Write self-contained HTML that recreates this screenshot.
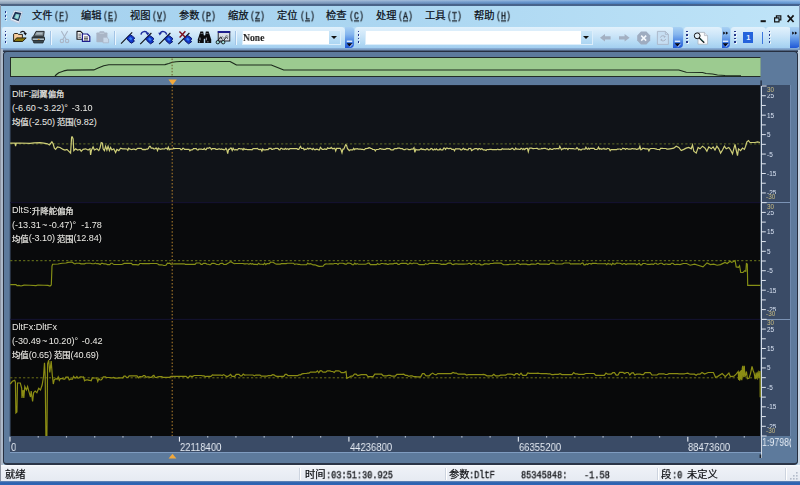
<!DOCTYPE html>
<html><head><meta charset="utf-8"><title>Flight data viewer</title>
<style>
html,body{margin:0;padding:0;background:#5d7a9c;font-family:"Liberation Sans",sans-serif;}
body{width:800px;height:485px;overflow:hidden;font-family:"Liberation Sans",sans-serif;}
#app{position:relative;width:800px;height:485px;overflow:hidden;background:#b5d6ef;}
#app div,#app span,#app svg{position:absolute;}
#app span.t{white-space:pre;}
svg.cj{overflow:visible;}
svg.cj text{font-family:"Liberation Sans","Noto Sans CJK SC",sans-serif;white-space:pre;}
#topband{left:0;top:0;width:800px;height:5px;background:linear-gradient(to bottom,rgba(255,255,255,.34) 0%,rgba(255,255,255,.08) 35%,rgba(0,0,30,.06) 60%,rgba(0,0,30,.26) 100%),linear-gradient(to right,#9aaec4 0%,#8aa3c2 35%,#5f93cf 70%,#4d8bd3 85%,#6fa3dc 100%);}
#topline{left:0;top:4.3px;width:800px;height:1.3px;background:linear-gradient(to right,#4e6382,#44638f);}
#menubar{left:0;top:5.5px;width:800px;height:21.5px;background:linear-gradient(to right,#a6d2ef 0%,#abd6f1 50%,#bfe4f8 100%);}
#leftedge{left:0;top:5px;width:1px;height:476px;background:#8d94a2;z-index:5;}
#leftedge2{left:1px;top:49px;width:2px;height:416px;background:#adb9c9;}
.mi{top:0;height:21.5px;font-family:"Liberation Mono",monospace;font-size:9.6px;color:#10141c;}
.mi .l{top:5.0px;white-space:pre;font-size:10px;transform-origin:0 50%;transform:scale(0.83,1.12);color:#0c1018;}
.mi u{text-decoration:underline;text-underline-offset:1px;}
#tbrow{left:0;top:27px;width:800px;height:21.5px;background:linear-gradient(to bottom,#b9def6,#a9d3f1);}
.tb{top:0;height:21px;border-radius:3px 4px 4px 3px;background:linear-gradient(to bottom,#e2f2fc 0%,#cfe7f9 35%,#b4daf4 75%,#a3cff0 100%);}
.cap{top:0;height:21px;border-radius:0 3px 4px 0;background:linear-gradient(to bottom,#a9d1f3 0%,#86b6ee 35%,#4a84e3 70%,#1f57d6 100%);}
.grip{width:3px;height:14px;top:3.5px;}
.grip i{position:absolute;left:0;width:1.7px;height:1.7px;background:#26388a;box-shadow:0.8px 0.8px 0 #ffffff;}
.sep{top:4px;width:1px;height:13.5px;background:#a2c4e6;box-shadow:1px 0 0 #eaf5fd;}
.combo{top:2.7px;height:15px;background:#fff;border:0.8px solid #dceefb;box-sizing:border-box;}
.combo .btn{right:0;top:0;width:11px;height:100%;background:linear-gradient(to bottom,#cbe6f8,#acd6f3);}
.combo .btn:after{content:"";position:absolute;left:2.6px;top:5.2px;border-left:3px solid transparent;border-right:3px solid transparent;border-top:3.2px solid #111;}
.combo .txt{left:0.5px;top:1.6px;font-family:"Liberation Serif",serif;font-size:10.7px;line-height:11px;font-weight:bold;color:#141414;transform-origin:0 50%;transform:scaleX(0.9);}
#tbshadow{left:0;top:48px;width:800px;height:3.5px;background:linear-gradient(to bottom,#8bb4df 0%,#7a98bc 40%,#2f3b50 80%,#2f3b50 100%);}
#frame{left:3px;top:51px;width:795px;height:414px;box-sizing:border-box;border:1px solid #262f40;border-bottom:2px solid #2b3547;border-radius:4px;background:#5d7a9c;}
#rightedge{left:798px;top:50px;width:2px;height:416px;background:#cbd7e4;}
#ov{left:9.5px;top:57.3px;width:751.6px;height:19.4px;background:#9ccb90;box-sizing:border-box;border:1.2px solid #232c28;border-left-width:0.8px;border-right:0.6px solid #7fa08c;}
.panel{left:10px;width:750px;}
#axisline{left:761px;top:86px;width:1px;height:372px;background:#cfd8e4;}
#ystrip{left:761.5px;top:85.3px;width:29.2px;height:350.5px;background:#3a4b66;border-right:1px solid #6f8aae;box-sizing:border-box;}
#xstrip{left:10px;top:436px;width:750.5px;height:17.2px;background:#3a4b66;border-bottom:1px solid #7f9cc0;box-sizing:border-box;}
.xl{top:442.0px;font-size:10.4px;line-height:12px;color:#e6ecf4;white-space:pre;transform-origin:0 50%;transform:scaleX(0.91);}
.yl{font-size:6.4px;color:#d8e2f2;white-space:pre;left:767.3px;line-height:7px;}
.lbl{left:12px;font-size:9.1px;color:#ecebe6;white-space:pre;line-height:11px;}
#status{left:0;top:465px;width:800px;height:16px;background:linear-gradient(to bottom,#fbfcfe 0%,#eef1f7 15%,#e6eaf2 100%);}
.st{top:3.6px;height:12px;width:100px;}
.st .m{top:1.1px;font-family:"Liberation Mono",monospace;font-size:10px;line-height:12px;color:#101216;white-space:pre;transform-origin:0 50%;transform:scale(0.858,1.13);}
.ssep{top:2.5px;width:1px;height:12.5px;background:#cdd4df;box-shadow:1px 0 0 #fff;}
#botband{left:0;top:481px;width:800px;height:4px;background:linear-gradient(to bottom,#6f8db6 0%,#3468b2 35%,#2a60b0 70%,#3169b8 100%);}

.l1{word-spacing:-1.25px;}
.l2{word-spacing:-0.8px;letter-spacing:-0.06px;}
.yb{color:#c9bd82;background:#3a4b66;height:6.6px;line-height:6.6px;padding-right:1px;z-index:2;}
.ydiv{left:761.5px;width:28.5px;height:1px;background:#7b93b5;}

.st .m,.mi .l,.combo .txt,.xl,.yl{will-change:transform;}

.st .m,.mi .l{-webkit-text-stroke:0.3px #101216;}
#redge0{left:799px;top:5px;width:1px;height:45px;background:#7f95b2;z-index:5;}

</style></head>
<body>
<div id="app">
<div id="topband"></div><div id="menubar">
<div class="grip" style="left:4.8px;top:5.6px;height:11px"><i style="top:0"></i><i style="top:3.8px"></i><i style="top:7.6px"></i></div>
<svg style="left:0;top:0" width="30" height="21.5" viewBox="0 5.5 30 21.5">
<path d="M14.1 9.9L22.6 11.4L19.1 22.9L10.2 19.2Z" fill="#e6edf6" stroke="#a9b9d2" stroke-width="0.6" stroke-linejoin="round"/>
<path d="M15 11.3L21.3 12.4L18.6 20.7L11.9 18.1Z" fill="#1d2f54"/>
<path d="M15.9 13.3L19.6 14L18.1 18.9L14.1 17.5Z" fill="#7fc6cc"/>
<path d="M16.6 14.4L18.4 14.8L17.6 17.6L15.6 17Z" fill="#a5dcd8"/>
<path d="M10.4 19.4L19 22.9L19.4 21.9" fill="none" stroke="#c4d0e2" stroke-width="0.7"/>
</svg>
<div class="mi" style="left:31.8px;width:40px"><svg class="cj" role="img" aria-label="文件" width="20.60" height="13.08" viewBox="0 -9.59 20.60 13.08" style="left:-0.3px;top:3.9px"><text x="0" y="0" font-size="10.3" fill="#0c1018" stroke="#0c1018" stroke-width="0.25">文件</text></svg><span class="l" style="left:22.0px">(<u>F</u>)</span></div>
<div class="mi" style="left:81.0px;width:40px"><svg class="cj" role="img" aria-label="编辑" width="20.60" height="13.08" viewBox="0 -9.59 20.60 13.08" style="left:-0.3px;top:3.9px"><text x="0" y="0" font-size="10.3" fill="#0c1018" stroke="#0c1018" stroke-width="0.25">编辑</text></svg><span class="l" style="left:22.0px">(<u>E</u>)</span></div>
<div class="mi" style="left:130.1px;width:40px"><svg class="cj" role="img" aria-label="视图" width="20.60" height="13.08" viewBox="0 -9.59 20.60 13.08" style="left:-0.3px;top:3.9px"><text x="0" y="0" font-size="10.3" fill="#0c1018" stroke="#0c1018" stroke-width="0.25">视图</text></svg><span class="l" style="left:22.0px">(<u>V</u>)</span></div>
<div class="mi" style="left:179.2px;width:40px"><svg class="cj" role="img" aria-label="参数" width="20.60" height="13.08" viewBox="0 -9.59 20.60 13.08" style="left:-0.3px;top:3.9px"><text x="0" y="0" font-size="10.3" fill="#0c1018" stroke="#0c1018" stroke-width="0.25">参数</text></svg><span class="l" style="left:22.0px">(<u>P</u>)</span></div>
<div class="mi" style="left:228.4px;width:40px"><svg class="cj" role="img" aria-label="缩放" width="20.60" height="13.08" viewBox="0 -9.59 20.60 13.08" style="left:-0.3px;top:3.9px"><text x="0" y="0" font-size="10.3" fill="#0c1018" stroke="#0c1018" stroke-width="0.25">缩放</text></svg><span class="l" style="left:22.0px">(<u>Z</u>)</span></div>
<div class="mi" style="left:277.6px;width:40px"><svg class="cj" role="img" aria-label="定位" width="20.60" height="13.08" viewBox="0 -9.59 20.60 13.08" style="left:-0.3px;top:3.9px"><text x="0" y="0" font-size="10.3" fill="#0c1018" stroke="#0c1018" stroke-width="0.25">定位</text></svg><span class="l" style="left:22.0px">(<u>L</u>)</span></div>
<div class="mi" style="left:326.7px;width:40px"><svg class="cj" role="img" aria-label="检查" width="20.60" height="13.08" viewBox="0 -9.59 20.60 13.08" style="left:-0.3px;top:3.9px"><text x="0" y="0" font-size="10.3" fill="#0c1018" stroke="#0c1018" stroke-width="0.25">检查</text></svg><span class="l" style="left:22.0px">(<u>C</u>)</span></div>
<div class="mi" style="left:375.9px;width:40px"><svg class="cj" role="img" aria-label="处理" width="20.60" height="13.08" viewBox="0 -9.59 20.60 13.08" style="left:-0.3px;top:3.9px"><text x="0" y="0" font-size="10.3" fill="#0c1018" stroke="#0c1018" stroke-width="0.25">处理</text></svg><span class="l" style="left:22.0px">(<u>A</u>)</span></div>
<div class="mi" style="left:425.0px;width:40px"><svg class="cj" role="img" aria-label="工具" width="20.60" height="13.08" viewBox="0 -9.59 20.60 13.08" style="left:-0.3px;top:3.9px"><text x="0" y="0" font-size="10.3" fill="#0c1018" stroke="#0c1018" stroke-width="0.25">工具</text></svg><span class="l" style="left:22.0px">(<u>T</u>)</span></div>
<div class="mi" style="left:474.1px;width:40px"><svg class="cj" role="img" aria-label="帮助" width="20.60" height="13.08" viewBox="0 -9.59 20.60 13.08" style="left:-0.3px;top:3.9px"><text x="0" y="0" font-size="10.3" fill="#0c1018" stroke="#0c1018" stroke-width="0.25">帮助</text></svg><span class="l" style="left:22.0px">(<u>H</u>)</span></div>
<svg style="left:758px;top:8px" width="40" height="12" viewBox="0 0 40 12">
<rect x="2.6" y="6.2" width="5.2" height="2" fill="#151515"/>
<path d="M18.4 1.9h4.4v4h-4.4z" fill="none" stroke="#151515" stroke-width="1.2"/>
<path d="M16.6 3.9h4.4v4h-4.4z" fill="#b9e0f7" stroke="#151515" stroke-width="1.2"/>
<path d="M29.6 1.4 L35.6 8 M35.6 1.4 L29.6 8" stroke="#151515" stroke-width="1.7" fill="none"/>
</svg>
</div><div id="topline"></div>
<div id="tbrow">
<div class="tb" style="left:2px;width:343px"></div><div class="cap" style="left:344.5px;width:9px"><svg style="left:1.0px;top:12.5px" width="7" height="8" viewBox="0 0 7 8"><rect x="0.8" y="0.6" width="5.4" height="1.3" fill="#eef4fc"/><path d="M0.6 3.2H6.4L3.5 6.4Z" fill="#0a0a14"/><path d="M3.5 7.2L6.6 3.8" stroke="#dfe9f8" stroke-width="0.8"/></svg></div><div class="grip" style="left:4.6px"><i style="top:0"></i><i style="top:3.6px"></i><i style="top:7.2px"></i><i style="top:10.8px"></i></div>
<svg style="left:0;top:0" width="345" height="22" viewBox="0 27 345 22">
<!-- open folder -->
<path d="M13.6 41.3V34.2L14.6 33.5H17.6L18.4 34.4H22.4V37.8" fill="#f6cc9c" stroke="#1a1408" stroke-width="0.9" stroke-linejoin="round"/>
<path d="M13.6 41.5L16.6 37.9H26.2L22.6 41.5Z" fill="#86760e" stroke="#1a1408" stroke-width="0.9" stroke-linejoin="round"/>
<path d="M20.4 32.6C21.6 30.8 24.6 30.8 25.2 33.2" fill="none" stroke="#15151a" stroke-width="1.3"/>
<path d="M23.4 32.9H26.8L25.6 35.6Z" fill="#15151a"/>
<!-- printer -->
<path d="M33.6 36.2L36 31.4H44.2L43.6 36.2Z" fill="#7d898f" stroke="#1b1f22" stroke-width="0.9" stroke-linejoin="round"/>
<path d="M36.8 32.6H42.6L42.2 34.6H35.8Z" fill="#aab6bc"/>
<rect x="31.6" y="36.2" width="13.4" height="4.6" rx="1.6" fill="#2a3236"/>
<rect x="32.6" y="38.4" width="11.4" height="1.6" fill="#aebec6"/>
<rect x="37.8" y="39" width="1.8" height="1.1" fill="#e09020"/>
<path d="M33 40.6H43.8L43 43H33.8Z" fill="#3d4c53" stroke="#1b1f22" stroke-width="0.7"/>
<!-- scissors (disabled) -->
<g fill="none" stroke="#a9b5c6" stroke-width="1.1" stroke-linecap="round">
<path d="M61.6 31.4L66.2 39.4"/><path d="M67.4 31.4L62.8 39.4"/>
<circle cx="61.9" cy="40.9" r="1.7"/><circle cx="67.1" cy="40.9" r="1.7"/>
</g>
<!-- copy -->
<path d="M77 31.4H80.6L82.6 33.4V39.2H77Z" fill="#f4f4f4" stroke="#15151a" stroke-width="1.1" stroke-linejoin="round"/>
<path d="M78.4 34.2H81M78.4 35.8H81M78.4 37.4H81" stroke="#444" stroke-width="0.7"/>
<path d="M82.4 34H87.4L89.8 36.4V41.4H82.4Z" fill="#f4f4f8" stroke="#1e1e8c" stroke-width="1.2" stroke-linejoin="round"/>
<path d="M84 37H88M84 38.6H88M84 40H88" stroke="#333" stroke-width="0.8"/>
<!-- paste (disabled) -->
<rect x="96.4" y="32.4" width="11" height="9.8" rx="0.8" fill="#a9b5c6"/>
<rect x="99.4" y="31.2" width="5" height="2.4" rx="0.8" fill="#a9b5c6"/>
<rect x="99.6" y="32.8" width="4.6" height="0.9" fill="#c4d0de"/>
<path d="M103 37.2H106.6L108.6 39V42.8H103Z" fill="#c9d9ea" stroke="#a9b5c6" stroke-width="0.8"/>
<!-- flags -->
<g>
<path d="M121 43.6L132.2 32.4" stroke="#101014" stroke-width="1.1"/>
<path d="M126.4 38.2L130.2 34.8L132.6 36.2L134.8 38.2L133.2 39.6L134.4 41.2L131.4 43.2L129 41.4Z" fill="#1238c8" stroke="#0a1668" stroke-width="1" stroke-linejoin="round"/>
<path d="M128.8 38.4L130.4 37L132.4 38.8L130.9 40.4Z" fill="#3c82f2"/>
</g>
<g transform="translate(19.2 0.6)">
<path d="M121 43.6L132.2 32.4" stroke="#101014" stroke-width="1.1"/>
<path d="M126.4 38.2L130.2 34.8L132.6 36.2L134.8 38.2L133.2 39.6L134.4 41.2L131.4 43.2L129 41.4Z" fill="#1238c8" stroke="#0a1668" stroke-width="1" stroke-linejoin="round"/>
<path d="M128.8 38.4L130.4 37L132.4 38.8L130.9 40.4Z" fill="#3c82f2"/>
</g>
<g transform="translate(38.2 0.6)">
<path d="M121 43.6L132.2 32.4" stroke="#101014" stroke-width="1.1"/>
<path d="M126.4 38.2L130.2 34.8L132.6 36.2L134.8 38.2L133.2 39.6L134.4 41.2L131.4 43.2L129 41.4Z" fill="#1238c8" stroke="#0a1668" stroke-width="1" stroke-linejoin="round"/>
<path d="M128.8 38.4L130.4 37L132.4 38.8L130.9 40.4Z" fill="#3c82f2"/>
</g>
<g transform="translate(57.2 0.6)">
<path d="M121 43.6L132.2 32.4" stroke="#101014" stroke-width="1.1"/>
<path d="M126.4 38.2L130.2 34.8L132.6 36.2L134.8 38.2L133.2 39.6L134.4 41.2L131.4 43.2L129 41.4Z" fill="#1238c8" stroke="#0a1668" stroke-width="1" stroke-linejoin="round"/>
<path d="M128.8 38.4L130.4 37L132.4 38.8L130.9 40.4Z" fill="#3c82f2"/>
</g>
<path d="M141 34.6C141.4 31.2 146 30.6 147.4 33" fill="none" stroke="#1c2c9c" stroke-width="1.4"/>
<path d="M145.6 32.8H149.4L147.8 35.6Z" fill="#1c2c9c"/>
<path d="M166.6 34.6C166.2 31.2 161.6 30.6 160.2 33" fill="none" stroke="#1c2c9c" stroke-width="1.4"/>
<path d="M158.2 32.8H162L159.8 35.6Z" fill="#1c2c9c"/>
<path d="M179.4 31.4L185.6 37.6M185.4 31.2L179.6 37.4" stroke="#7a0e1e" stroke-width="1.4"/>
<!-- binoculars -->
<path d="M200.4 31.6H203.2L203.8 35.4V43H197.8V39.4Z" fill="#0c0c0e"/>
<path d="M205.8 31.6H208.6L211.2 39.4V43H205.2V35.4Z" fill="#0c0c0e"/>
<rect x="203" y="35.4" width="3" height="3.4" fill="#0c0c0e"/>
<rect x="200.6" y="33" width="2.2" height="0.9" fill="#70747c"/><rect x="206.2" y="33" width="2.2" height="0.9" fill="#70747c"/>
<rect x="199.4" y="37.6" width="1.2" height="2.6" fill="#8a8e98"/><rect x="205.8" y="37.6" width="1.2" height="2.6" fill="#8a8e98"/>
<rect x="199" y="41.4" width="1" height="0.9" fill="#c8c8d0"/><rect x="207.4" y="41.4" width="1" height="0.9" fill="#c8c8d0"/>
<!-- picture / glasses -->
<rect x="218.2" y="31.6" width="11.6" height="9.4" fill="#d9dee6" stroke="#16161c" stroke-width="0.9"/>
<rect x="217.8" y="31" width="12.4" height="2" fill="#1e1e8c"/>
<path d="M220 39.4L222.4 36.4L224 38.6L226.6 35L228.4 37.2" fill="none" stroke="#7a8088" stroke-width="0.8"/>
<path d="M217.2 41.6L220.6 36.8L222.4 39.6M222.8 41.6L226.4 37L228 38.6" fill="none" stroke="#101014" stroke-width="0.9"/>
<circle cx="217.8" cy="42.2" r="1.7" fill="#a2e2de" stroke="#101014" stroke-width="0.9"/>
<circle cx="223.2" cy="42.2" r="1.7" fill="#a2e2de" stroke="#101014" stroke-width="0.9"/>
<path d="M219.4 42H221.6" stroke="#101014" stroke-width="0.8"/>
</svg>

<div class="sep" style="left:50px"></div><div class="sep" style="left:114px"></div><div class="sep" style="left:235px"></div>
<div class="combo" style="left:241.5px;width:99px"><span class="txt t">None</span><div class="btn"></div></div>
<div class="tb" style="left:355px;width:319px"></div><div class="cap" style="left:673px;width:9.5px"><svg style="left:1.2px;top:12.5px" width="7" height="8" viewBox="0 0 7 8"><rect x="0.8" y="0.6" width="5.4" height="1.3" fill="#eef4fc"/><path d="M0.6 3.2H6.4L3.5 6.4Z" fill="#0a0a14"/><path d="M3.5 7.2L6.6 3.8" stroke="#dfe9f8" stroke-width="0.8"/></svg></div><div class="grip" style="left:357.6px"><i style="top:0"></i><i style="top:3.6px"></i><i style="top:7.2px"></i><i style="top:10.8px"></i></div>
<div class="combo" style="left:364.5px;width:228px"><div class="btn"></div></div>
<div class="tb" style="left:683.5px;width:38.5px"></div><div class="cap" style="left:721.5px;width:8px"><svg style="left:1.3px;top:4.3px" width="6" height="5" viewBox="0 0 6 5"><path d="M0.2 0.4L2.5 2.1L0.2 3.8ZM2.9 0.4L5.2 2.1L2.9 3.8Z" fill="#0c0c14"/></svg><svg style="left:0.5px;top:12.5px" width="7" height="8" viewBox="0 0 7 8"><rect x="0.8" y="0.6" width="5.4" height="1.3" fill="#eef4fc"/><path d="M0.6 3.2H6.4L3.5 6.4Z" fill="#0a0a14"/><path d="M3.5 7.2L6.6 3.8" stroke="#dfe9f8" stroke-width="0.8"/></svg></div><div class="grip" style="left:686px"><i style="top:0"></i><i style="top:3.6px"></i><i style="top:7.2px"></i><i style="top:10.8px"></i></div>
<div class="tb" style="left:731px;width:34.5px"></div><div class="grip" style="left:734px"><i style="top:0"></i><i style="top:3.6px"></i><i style="top:7.2px"></i><i style="top:10.8px"></i></div>
<div style="left:743.3px;top:5px;width:10px;height:10.5px;background:#2463dc"></div><span class="t" style="left:746.3px;top:6.6px;font-size:7.5px;font-weight:bold;color:#e8f0ff;line-height:8px">1</span>
<div style="left:761.5px;top:4.5px;width:1.2px;height:12.5px;background:#3d78de"></div>
<div class="tb" style="left:766px;width:25px"></div><div class="cap" style="left:790px;width:10px"><svg style="left:2.3px;top:4.3px" width="6" height="5" viewBox="0 0 6 5"><path d="M0.2 0.4L2.5 2.1L0.2 3.8ZM2.9 0.4L5.2 2.1L2.9 3.8Z" fill="#0c0c14"/></svg></div><div class="grip" style="left:768.6px"><i style="top:0"></i><i style="top:3.6px"></i><i style="top:7.2px"></i><i style="top:10.8px"></i></div>
<svg style="left:594px;top:0" width="120" height="22" viewBox="594 27 120 22">
<path d="M600 37.7L605 34V36.2H610.6V39.4H605V41.6Z" fill="#a3b0c2"/>
<path d="M629.6 37.7L624.6 34V36.2H619V39.4H624.6V41.6Z" fill="#a3b0c2"/>
<path d="M641 31.6H646.4L650.2 35.4V40.6L646.4 44.4H641L637.2 40.6V35.4Z" fill="#9eacc0"/>
<path d="M641.2 35.6L646.2 40.6M646.2 35.6L641.2 40.6" stroke="#f4f8fc" stroke-width="1.5"/>
<path d="M657.4 31.4H665.4L668.4 34.4V44.4H657.4Z" fill="#c6def2" stroke="#a9b5c6" stroke-width="0.9" stroke-linejoin="round"/>
<path d="M665.4 31.4V34.4H668.4" fill="none" stroke="#a9b5c6" stroke-width="0.8"/>
<path d="M660.4 37.6C660.6 35.6 663.6 35.2 664.6 36.4M665.6 39C665.4 41 662.4 41.4 661.4 40.2" fill="none" stroke="#a9b5c6" stroke-width="1"/>
<path d="M663.6 35.4L666 36.6L664 38Z M662.4 41.2L660 40L662 38.6Z" fill="#a9b5c6"/>
<!-- magnifier + doc -->
<path d="M698 32.4H704.4L707.6 35.6V44.2H698Z" fill="#fbfcfd" stroke="#aab2bc" stroke-width="0.8" stroke-linejoin="round"/>
<path d="M704.4 32.4V35.6H707.6" fill="#e4e8ee" stroke="#aab2bc" stroke-width="0.7"/>
<circle cx="697.2" cy="35.8" r="2.9" fill="rgba(235,245,250,.75)" stroke="#16181c" stroke-width="1"/>
<path d="M699.4 38L703.8 42.2" stroke="#16181c" stroke-width="1.5" stroke-linecap="round"/>
<path d="M700.4 38.6L703.4 41.4" stroke="#2f9a8c" stroke-width="0.6"/>
</svg>

</div><div id="tbshadow"></div>
<div id="leftedge"></div><div id="leftedge2"></div><div id="rightedge"></div><div id="redge0"></div>
<div id="frame"></div>
<div id="ov"></div>
<svg style="left:0;top:0" width="800" height="485" viewBox="0 0 800 485">
<polyline fill="none" stroke="#1c2a1c" stroke-width="1.1" stroke-linejoin="round" points="55,76 56.5,74.5 58.75,72.75 63.75,70.9 67.5,70.1 93.75,69.9 98.75,67.75 103.75,65.75 108.75,64.8 165,64.6 168.75,63.5 172.5,62.3 176,61.8 180,61.5 230,61.5 233.75,63.5 236.5,65 271.25,65 283.75,70 678.75,70 686.25,72.2 702.5,72.5 706,73.5 712.5,74 717.5,75 725,75.5 741,75.9"/>
<rect x="10.2" y="86.00" width="750.2" height="116.67" fill="#101318"/>
<rect x="10.2" y="202.67" width="750.2" height="116.67" fill="#090a0c"/>
<rect x="10.2" y="319.33" width="750.2" height="116.67" fill="#08090a"/>
<rect x="9.6" y="85.4" width="0.8" height="350.6" fill="#3a4c66"/>
<rect x="10.2" y="202.17" width="750.2" height="1" fill="#130f2e"/>
<rect x="10.2" y="318.83" width="750.2" height="1" fill="#130f2e"/>
<line x1="10.2" y1="143.9" x2="760" y2="143.9" stroke="#6f7c2c" stroke-width="0.85" stroke-dasharray="2.2 2.1"/>
<polyline fill="none" stroke="#cfcf78" stroke-width="1.2" stroke-linejoin="miter" points="10.2,143.2 15.0,143.2 15.6,146.0 16.2,143.2 20.0,143.0 30.0,143.3 34.0,142.8 40.0,142.6 43.8,143.1 47.5,143.8 49.4,145.0 51.9,141.9 53.1,143.8 54.4,148.1 55.6,149.4 57.5,146.9 60.0,147.5 63.1,149.4 65.0,150.0 66.9,149.4 69.4,151.9 70.6,153.1 71.6,137.0 72.3,136.9 73.1,138.8 73.8,150.6 75.6,148.8 77.5,150.0 80.0,149.4 81.2,151.2 83.1,149.4 85.6,148.8 88.1,150.0 90.0,148.8 90.6,155.0 91.5,150.0 93.1,146.9 94.4,150.0 96.9,148.8 98.8,150.6 100.0,148.1 101.2,142.5 102.5,143.1 103.1,148.8 104.4,150.6 105.6,146.2 106.9,150.0 108.1,146.2 109.4,150.6 110.6,147.5 111.9,150.0 113.8,148.8 115.6,152.5 116.9,149.4 118.8,150.6 120.6,148.1 122.5,148.8 125.0,148.9 126.0,149.0 126.9,149.0 127.8,150.3 128.7,148.2 129.6,148.9 130.5,149.3 131.4,149.7 132.3,149.3 133.2,149.2 134.1,149.2 135.0,149.4 135.9,149.8 136.8,148.9 137.7,148.3 138.6,148.3 139.5,148.3 140.4,148.3 141.3,148.3 142.2,149.2 143.1,149.8 144.0,149.3 144.9,149.8 145.8,149.4 146.7,149.1 147.6,149.1 148.5,148.3 149.4,146.3 150.3,146.3 151.2,148.2 152.1,148.2 153.0,148.2 153.9,149.0 154.8,149.0 155.7,148.2 156.6,148.2 157.5,150.5 158.4,148.2 159.3,148.8 160.2,149.3 161.1,149.2 162.0,148.9 162.9,148.9 163.8,149.0 164.7,149.0 165.6,148.1 166.5,148.2 167.4,149.3 168.3,147.2 169.2,149.8 170.1,149.2 171.0,149.2 171.9,149.2 172.8,149.2 173.7,148.1 174.6,148.7 175.5,148.5 176.4,148.5 177.3,148.5 178.2,148.5 179.1,148.5 180.0,148.5 180.9,149.7 181.8,149.7 182.7,148.4 183.6,148.4 184.5,149.3 185.4,149.3 186.3,149.3 187.2,149.3 188.1,149.3 189.0,149.3 189.9,150.8 190.8,149.9 191.7,149.8 192.6,149.6 193.5,148.6 194.4,148.6 195.3,148.6 196.2,148.6 197.1,149.8 198.0,150.0 198.9,149.1 199.8,149.0 200.7,149.2 201.6,149.2 202.5,149.5 203.4,149.5 204.3,148.4 205.2,149.6 206.1,149.6 207.0,148.2 207.9,148.2 208.8,148.2 209.7,147.5 210.6,148.1 211.5,149.6 212.4,148.7 213.3,148.7 214.2,148.7 215.1,148.7 216.0,149.4 216.9,149.4 217.8,149.4 218.7,148.8 219.6,148.9 220.5,149.4 221.4,148.9 222.3,149.4 223.2,149.4 224.1,149.8 225.0,149.5 225.9,148.3 226.8,149.7 227.7,153.6 228.6,149.4 229.5,149.4 230.4,148.2 231.3,148.2 232.2,150.4 233.1,148.2 234.0,149.6 234.9,150.1 235.8,149.4 236.7,149.8 237.6,149.8 238.5,148.5 239.4,148.5 240.3,148.8 241.2,148.8 242.1,148.8 243.0,149.9 243.9,148.4 244.8,149.3 245.7,149.3 246.6,149.3 247.5,149.7 248.4,149.7 249.3,149.7 250.2,149.7 251.1,149.7 252.0,149.8 252.9,148.8 253.8,148.6 254.7,148.6 255.6,148.6 256.5,148.6 257.4,148.4 258.3,149.2 259.2,149.6 260.1,149.4 261.0,149.4 261.9,151.1 262.8,148.9 263.7,149.8 264.6,149.8 265.5,149.8 266.4,149.6 267.3,149.6 268.2,149.6 269.1,148.3 270.0,148.6 270.9,148.3 271.8,149.3 272.7,149.3 273.6,148.8 274.5,148.8 275.4,148.3 276.3,148.3 277.2,148.3 278.1,148.6 279.0,149.6 279.9,149.8 280.8,148.3 281.7,148.3 282.6,149.1 283.5,149.2 284.4,149.3 285.3,148.4 286.2,149.2 287.1,148.9 288.0,148.9 288.9,149.5 289.8,148.7 290.7,148.7 291.6,148.7 292.5,148.7 293.4,148.7 294.3,148.7 295.2,148.7 296.1,148.7 297.0,148.7 297.9,149.4 298.8,149.4 299.7,147.6 300.6,146.4 301.5,148.4 302.4,148.5 303.3,148.2 304.2,149.8 305.1,149.1 306.0,149.3 306.9,149.0 307.8,148.1 308.7,149.0 309.6,148.4 310.5,148.4 311.4,148.9 312.3,149.7 313.2,148.4 314.1,149.2 315.0,149.8 315.9,149.4 316.8,149.2 317.7,149.4 318.6,149.8 319.5,149.8 320.4,147.3 321.3,148.3 322.2,149.4 323.1,149.4 324.0,149.4 324.9,148.8 325.8,149.4 326.7,149.4 327.6,147.8 328.5,148.4 329.4,148.4 330.3,148.4 331.2,147.4 332.1,148.4 333.0,148.8 333.9,148.4 334.8,148.4 335.7,150.9 336.6,148.4 337.5,148.4 338.4,148.4 339.3,148.4 340.2,148.4 341.1,149.8 342.0,152.8 342.9,149.2 343.8,149.2 344.7,147.1 345.6,144.7 346.5,145.1 347.4,148.5 348.3,149.5 349.2,150.7 350.1,149.8 351.0,149.8 351.9,149.8 352.8,149.8 353.7,148.4 354.6,149.6 355.5,148.8 356.4,148.8 357.3,148.6 358.2,149.2 359.1,149.2 360.0,149.2 360.9,149.2 361.8,149.3 362.7,149.3 363.6,149.7 364.5,149.7 365.4,148.7 366.3,148.7 367.2,148.3 368.1,148.3 369.0,147.6 369.9,147.9 370.8,148.5 371.7,148.5 372.6,149.5 373.5,149.5 374.4,149.5 375.3,150.9 376.2,149.5 377.1,149.5 378.0,149.5 378.9,149.3 379.8,148.7 380.7,148.7 381.6,149.2 382.5,149.2 383.4,149.4 384.3,149.4 385.2,149.4 386.1,148.9 387.0,148.5 387.9,148.7 388.8,148.7 389.7,148.7 390.6,149.7 391.5,149.8 392.4,149.8 393.3,149.8 394.2,148.8 395.1,148.6 396.0,148.6 396.9,148.6 397.8,148.2 398.7,148.2 399.6,148.2 400.5,148.6 401.4,148.6 402.3,148.6 403.2,149.4 404.1,149.7 405.0,149.7 405.9,149.0 406.8,149.0 407.7,149.0 408.6,149.6 409.5,149.6 410.4,149.6 411.3,149.1 412.2,149.1 413.1,148.9 414.0,147.7 414.9,152.4 415.8,149.2 416.7,149.9 417.6,149.9 418.5,149.9 419.4,149.9 420.3,149.3 421.2,148.5 422.1,149.5 423.0,149.1 423.9,149.6 424.8,149.7 425.7,149.8 426.6,148.8 427.5,148.8 428.4,149.9 429.3,149.9 430.2,149.5 431.1,148.4 432.0,148.8 432.9,149.8 433.8,149.8 434.7,149.0 435.6,149.7 436.5,148.8 437.4,149.8 438.3,149.8 439.2,149.8 440.1,148.7 441.0,149.8 441.9,149.8 442.8,149.8 443.7,148.2 444.6,148.2 445.5,149.4 446.4,148.1 447.3,148.2 448.2,148.6 449.1,148.6 450.0,148.4 450.9,148.4 451.8,149.3 452.7,149.3 453.6,149.3 454.5,150.8 455.4,148.8 456.3,148.8 457.2,148.8 458.1,148.8 459.0,148.8 459.9,148.8 460.8,149.9 461.7,149.9 462.6,149.0 463.5,148.4 464.4,149.5 465.3,149.1 466.2,149.6 467.1,149.8 468.0,149.8 468.9,148.4 469.8,148.5 470.7,148.4 471.6,150.5 472.5,149.9 473.4,149.5 474.3,148.9 475.2,148.7 476.1,148.7 477.0,148.7 477.9,149.8 478.8,148.6 479.7,148.6 480.6,149.4 481.5,148.6 482.4,149.0 483.3,149.9 484.2,149.9 485.1,149.9 486.0,150.4 486.9,149.5 487.8,149.5 488.7,149.7 489.6,149.4 490.5,149.4 491.4,149.4 492.3,149.7 493.2,149.7 494.1,149.7 495.0,149.7 495.9,149.7 496.8,149.7 497.7,149.1 498.6,149.6 499.5,149.6 500.4,149.6 501.3,149.6 502.2,148.6 503.1,149.2 504.0,149.2 504.9,149.2 505.8,149.2 506.7,149.2 507.6,149.2 508.5,148.9 509.4,149.3 510.3,149.3 511.2,148.9 512.1,148.2 513.0,148.7 513.9,149.7 514.8,149.7 515.7,148.1 516.6,149.1 517.5,149.1 518.4,149.1 519.3,149.3 520.2,149.3 521.1,148.3 522.0,148.7 522.9,149.6 523.8,148.7 524.7,149.6 525.6,148.5 526.5,148.3 527.4,148.3 528.3,151.6 529.2,148.3 530.1,148.2 531.0,148.2 531.9,148.2 532.8,148.7 533.7,148.7 534.6,148.5 535.5,148.5 536.4,148.4 537.3,148.4 538.2,149.2 539.1,149.2 540.0,149.0 540.9,149.0 541.8,148.5 542.7,148.7 543.6,148.4 544.5,148.4 545.4,148.3 546.3,149.0 547.2,148.9 548.1,149.6 549.0,149.6 549.9,148.6 550.8,149.1 551.7,149.4 552.6,149.4 553.5,148.7 554.4,148.5 555.3,148.8 556.2,148.7 557.1,148.7 558.0,148.7 558.9,148.9 559.8,146.3 560.7,148.3 561.6,149.8 562.5,148.8 563.4,148.8 564.3,148.3 565.2,148.9 566.1,148.4 567.0,148.5 567.9,149.5 568.8,148.3 569.7,148.5 570.6,148.7 571.5,148.7 572.4,148.7 573.3,148.7 574.2,149.0 575.1,149.0 576.0,149.0 576.9,147.7 577.8,148.5 578.7,149.8 579.6,149.2 580.5,149.8 581.4,149.8 582.3,149.0 583.2,149.0 584.1,149.2 585.0,149.2 585.9,147.3 586.8,148.8 587.7,149.2 588.6,148.1 589.5,149.1 590.4,148.4 591.3,148.4 592.2,148.4 593.1,148.4 594.0,148.4 594.9,149.5 595.8,149.5 596.7,149.5 597.6,149.1 598.5,147.1 599.4,149.1 600.3,148.6 601.2,149.3 602.1,148.9 603.0,148.9 603.9,148.3 604.8,149.2 605.7,149.2 606.6,149.2 607.5,148.3 608.4,148.5 609.3,148.9 610.2,150.7 611.1,149.7 612.0,149.7 612.9,149.7 613.8,149.7 614.7,149.7 615.6,149.7 616.5,149.7 617.4,149.1 618.3,149.2 619.2,149.0 620.1,149.0 621.0,149.8 621.9,149.1 622.8,148.2 623.7,148.6 624.6,148.6 625.5,149.4 626.4,148.5 627.3,148.5 628.2,149.2 629.1,149.2 630.0,149.2 630.9,149.2 631.8,148.7 632.7,148.7 633.6,148.8 634.5,148.8 635.4,148.8 636.3,149.3 637.2,149.3 638.1,148.8 639.0,148.8 639.9,146.3 640.8,149.7 641.7,149.5 642.6,148.3 643.5,148.3 644.4,148.6 645.3,148.9 646.2,148.9 647.1,148.9 648.0,148.9 648.9,150.8 649.8,148.9 650.7,148.6 651.6,148.5 652.5,148.5 653.4,148.5 654.3,148.5 655.2,148.8 656.1,148.8 657.0,149.5 657.9,149.5 658.8,149.5 659.7,149.7 660.6,148.3 661.5,148.3 662.4,148.3 663.3,148.5 664.2,148.5 665.1,148.5 666.0,148.5 666.9,149.2 667.8,149.2 670.0,148.8 673.8,148.1 676.2,146.2 678.8,147.5 681.2,150.6 683.8,149.4 686.2,148.1 688.8,147.5 691.2,148.8 692.5,145.0 693.8,151.2 696.2,153.1 698.1,147.5 700.0,148.8 702.5,146.2 705.0,148.1 706.9,151.2 708.8,146.9 711.2,148.8 713.1,146.9 715.0,150.0 716.9,146.2 718.8,148.8 720.6,153.1 722.5,150.0 724.4,146.2 726.2,148.8 728.8,147.5 730.6,150.0 732.5,153.8 733.8,148.8 735.0,144.4 736.2,150.0 737.5,155.6 738.5,148.8 740.6,150.6 742.5,148.1 744.4,149.4 745.6,146.2 746.9,141.9 748.5,140.6 750.0,142.5 755.0,142.5 757.5,141.9 760.0,142.5"/>
<line x1="10.2" y1="260.7" x2="760" y2="260.7" stroke="#7a881e" stroke-width="0.9" stroke-dasharray="2.2 2.1"/>
<polyline fill="none" stroke="#869016" stroke-width="1.15" stroke-linejoin="miter" points="10.2,284.6 16.0,284.6 17.0,285.6 19.0,285.4 21.0,286.0 24.0,285.2 30.0,285.3 36.0,285.6 38.0,285.0 44.0,285.2 48.0,285.4 50.0,286.0 51.3,285.0 52.0,266.0 52.6,264.2 58.0,264.0 62.0,263.3 66.0,263.0 68.0,262.4 72.0,262.0 74.0,263.4 75.0,263.9 76.2,263.2 77.4,263.2 78.6,263.2 79.8,263.4 81.0,263.8 82.2,263.8 83.4,263.8 84.6,263.8 85.8,263.2 87.0,263.2 88.2,263.2 89.4,263.2 90.6,263.2 91.8,263.7 93.0,263.7 94.2,263.7 95.4,263.1 96.6,263.7 97.8,263.6 99.0,263.9 100.2,264.6 101.4,263.3 102.6,263.3 103.8,263.9 105.0,263.9 106.2,264.0 107.4,264.6 108.6,264.6 109.8,264.6 111.0,263.2 112.2,263.2 113.4,264.3 114.6,264.5 115.8,264.5 117.0,264.5 118.2,264.5 119.4,264.5 120.6,264.5 121.8,264.5 123.0,263.9 124.2,263.4 125.4,263.4 126.6,263.4 127.8,263.4 129.0,263.4 130.2,263.4 131.4,263.4 132.6,264.6 133.8,264.6 135.0,264.6 136.2,264.6 137.4,264.8 138.6,264.8 139.8,263.5 141.0,263.5 142.2,263.6 143.4,263.6 144.6,263.6 145.8,263.6 147.0,263.6 148.2,263.6 149.4,263.6 150.6,263.5 151.8,263.5 153.0,263.5 154.2,263.5 155.4,263.5 156.6,263.5 157.8,263.9 159.0,264.8 160.2,264.8 161.4,264.8 162.6,265.0 163.8,265.5 165.0,265.5 166.2,265.1 167.4,263.2 168.6,263.4 169.8,263.1 171.0,264.4 172.2,264.0 173.4,264.0 174.6,263.8 175.8,263.8 177.0,263.9 178.2,263.9 179.4,263.9 180.6,263.9 181.8,263.8 183.0,263.8 184.2,263.8 185.4,264.3 186.6,264.3 187.8,264.3 189.0,264.3 190.2,264.3 191.4,264.3 192.6,264.3 193.8,264.3 195.0,264.3 196.2,263.0 197.4,263.0 198.6,263.0 199.8,263.0 201.0,264.4 202.2,264.4 203.4,263.4 204.6,263.4 205.8,263.4 207.0,264.2 208.2,264.2 209.4,264.6 210.6,264.7 211.8,263.4 213.0,263.4 214.2,263.4 215.4,263.7 216.6,264.5 217.8,264.5 219.0,264.7 220.2,263.5 221.4,263.4 222.6,263.4 223.8,264.5 225.0,264.5 226.2,264.4 227.4,263.6 228.6,263.0 229.8,262.0 231.0,261.7 232.2,262.5 233.4,263.3 234.6,263.7 235.8,263.5 237.0,263.5 238.2,263.5 239.4,263.5 240.6,263.5 241.8,263.5 243.0,263.5 244.2,263.9 245.4,263.9 246.6,263.7 247.8,263.7 249.0,264.4 250.2,263.4 251.4,264.1 252.6,263.7 253.8,264.4 255.0,264.4 256.2,264.4 257.4,264.7 258.6,263.2 259.8,264.2 261.0,264.2 262.2,264.2 263.4,264.6 264.6,263.2 265.8,264.6 267.0,263.6 268.2,263.5 269.4,263.7 270.6,262.1 271.8,262.2 273.0,262.3 274.2,263.0 275.4,263.7 276.6,264.1 277.8,264.1 279.0,264.1 280.2,264.1 281.4,263.6 282.6,263.6 283.8,263.6 285.0,263.6 286.2,263.6 287.4,263.2 288.6,263.2 289.8,263.2 291.0,263.2 292.2,263.2 293.4,263.2 294.6,264.3 295.8,264.0 297.0,264.0 298.2,264.3 299.4,264.3 300.6,264.7 301.8,264.7 303.0,264.7 304.2,264.7 305.4,264.7 306.6,264.7 307.8,263.1 309.0,264.1 310.2,263.7 311.4,264.0 312.6,264.7 313.8,264.8 315.0,264.8 317.0,265.6 319.0,266.4 323.0,266.3 324.5,264.5 326.0,263.9 327.2,264.0 328.4,264.0 329.6,263.9 330.8,263.9 332.0,263.9 333.2,264.0 334.4,263.5 335.6,263.5 336.8,263.5 338.0,264.5 339.2,263.2 340.4,263.2 341.6,263.2 342.8,263.2 344.0,263.6 345.2,264.1 346.4,264.1 347.6,263.1 348.8,263.1 350.0,263.2 351.2,263.8 352.4,264.7 353.6,264.7 354.8,263.1 356.0,264.2 357.2,263.6 358.4,264.2 359.6,264.2 360.8,264.2 362.0,264.2 363.2,264.2 364.4,264.2 365.6,264.2 366.8,263.7 368.0,263.1 369.2,263.1 370.4,264.6 371.6,264.6 372.8,264.6 374.0,264.6 375.2,264.6 376.4,264.6 377.6,263.5 378.8,264.4 380.0,264.3 381.2,263.5 382.4,263.5 383.6,263.8 384.8,263.9 386.0,263.6 387.2,264.3 388.4,264.3 389.6,263.8 390.8,263.8 392.0,263.8 393.2,263.8 394.4,263.3 395.6,263.3 396.8,263.2 398.0,264.4 399.2,264.4 400.4,263.5 401.6,263.4 402.8,263.4 404.0,263.4 405.2,263.4 406.4,263.4 407.6,264.3 408.8,264.0 410.0,263.0 411.2,263.6 412.4,263.7 413.6,263.0 414.8,263.2 416.0,263.2 417.2,263.2 418.4,264.3 419.6,264.6 420.8,264.6 422.0,264.6 423.2,264.6 424.4,264.7 425.6,263.6 426.8,264.2 428.0,264.2 429.2,263.4 430.4,263.4 431.6,263.4 432.8,263.4 434.0,263.4 435.2,263.4 436.4,263.5 437.6,263.5 438.8,263.7 440.0,263.7 441.2,264.3 442.4,264.3 443.6,264.2 444.8,264.4 446.0,264.4 447.2,263.6 448.4,263.1 449.6,263.1 450.8,263.1 452.0,264.2 453.2,264.6 454.4,264.1 455.6,263.8 456.8,263.8 458.0,264.1 459.2,264.1 460.4,264.1 461.6,264.1 462.8,264.1 464.0,264.1 465.2,264.0 466.4,264.0 467.6,264.0 468.8,263.3 470.0,263.3 471.2,264.5 472.4,263.7 473.6,263.2 474.8,263.2 476.0,264.2 477.2,264.2 478.4,263.9 479.6,263.9 480.8,264.8 482.0,264.8 483.2,264.7 484.4,263.9 485.6,263.9 486.8,263.9 488.0,264.1 489.2,264.1 490.4,263.5 491.6,263.5 492.8,263.5 494.0,263.1 495.2,263.1 496.4,263.1 497.6,263.1 498.8,263.1 500.0,263.1 501.2,263.1 502.4,264.1 503.6,264.7 504.8,264.7 506.0,264.7 507.2,264.6 508.4,264.6 509.6,264.2 510.8,264.2 512.0,264.2 513.2,264.2 514.4,264.2 515.6,264.2 516.8,263.3 518.0,263.3 519.2,263.9 520.4,264.6 521.6,264.0 522.8,264.1 524.0,264.1 525.2,264.1 526.4,264.1 527.6,264.6 528.8,264.6 530.0,264.6 531.2,264.1 532.4,264.1 533.6,264.0 534.8,264.2 536.0,264.2 537.2,263.3 538.4,263.3 539.6,264.1 540.8,264.1 542.0,264.1 543.2,264.1 544.4,264.1 545.6,264.1 546.8,264.1 548.0,264.3 549.2,264.3 550.4,263.1 551.6,263.1 552.8,263.1 554.0,263.1 555.2,264.0 556.4,264.0 557.6,264.0 558.8,264.0 560.0,264.0 561.2,264.0 562.4,264.0 563.6,263.2 564.8,263.0 566.0,263.0 567.2,263.0 568.4,263.0 569.6,263.0 570.8,264.1 572.0,263.8 573.2,263.8 574.4,263.8 575.6,263.8 576.8,263.8 578.0,263.8 579.2,263.8 580.4,264.2 581.6,263.3 582.8,263.0 584.0,264.8 585.2,264.8 586.4,263.9 587.6,264.5 588.8,263.5 590.0,263.5 591.2,264.1 592.4,263.4 593.6,263.3 594.8,263.3 596.0,263.3 597.2,263.7 598.4,263.7 599.6,263.7 600.8,263.7 602.0,263.7 603.2,263.7 604.4,263.7 605.6,263.6 606.8,264.6 608.0,263.2 609.2,264.1 610.4,263.8 611.6,264.8 612.8,263.1 614.0,264.1 615.2,264.1 616.4,263.1 617.6,263.1 618.8,263.2 620.0,263.2 621.2,263.7 622.4,264.4 623.6,263.6 624.8,263.6 626.0,264.6 627.2,263.9 628.4,263.9 629.6,263.8 630.8,263.8 632.0,263.8 633.2,263.8 634.4,263.8 635.6,263.8 636.8,264.7 638.0,263.9 639.2,263.3 640.4,264.8 641.6,264.8 642.8,263.5 644.0,263.5 645.2,263.5 646.4,264.0 647.6,264.4 648.8,264.4 650.0,264.4 651.2,264.1 652.4,264.1 653.6,264.3 654.8,263.2 656.0,263.2 657.2,264.2 658.4,264.2 659.6,263.5 660.8,263.2 662.0,263.2 663.2,264.2 664.4,264.6 665.6,264.0 666.8,264.0 668.0,264.4 669.2,264.4 670.4,264.4 671.6,263.2 672.8,263.2 674.0,264.2 675.2,264.7 676.4,264.3 677.6,264.3 680.0,264.6 683.4,263.5 686.7,263.5 690.1,265.2 694.6,264.1 698.0,265.2 703.0,266.9 707.0,262.9 710.4,264.6 713.7,264.1 717.1,265.2 720.5,264.6 725.0,262.4 727.2,263.5 730.0,261.2 731.7,262.4 735.1,260.7 736.2,266.9 738.5,267.4 739.6,265.7 740.7,272.5 743.0,272.5 744.7,270.8 745.8,271.4 746.4,263.5 747.3,264.0 747.7,285.4 760.4,285.4"/>
<line x1="10.2" y1="377.8" x2="760" y2="377.8" stroke="#7f8418" stroke-width="0.85" stroke-dasharray="2.2 2.1"/>
<polyline fill="none" stroke="#8b8d14" stroke-width="1.2" stroke-linejoin="miter" points="10.2,384.0 12.4,381.3 14.7,380.4 15.4,382.2 15.9,412.9 16.9,412.0 17.5,383.0 20.3,383.0 21.7,388.3 22.0,398.0 23.1,390.0 23.8,398.0 24.8,386.6 26.4,390.0 27.6,386.6 29.0,391.8 30.5,397.0 31.2,391.0 32.6,401.5 33.6,392.7 35.2,391.0 36.9,392.7 38.7,388.3 40.5,390.0 42.2,384.8 43.6,376.0 44.5,362.9 45.2,376.0 45.9,436.0 46.9,436.0 47.6,363.8 48.7,360.3 49.8,372.5 51.2,361.1 52.2,374.3 53.3,384.0 54.3,379.6 55.5,379.0 56.0,378.6 57.1,379.4 58.2,377.0 59.3,380.3 60.4,378.6 61.5,378.6 62.6,378.6 63.7,379.1 64.8,379.1 65.9,377.1 67.0,377.1 68.1,377.1 69.2,379.9 70.3,379.2 71.4,379.2 72.5,379.2 73.6,376.4 74.7,377.9 75.8,377.9 76.9,376.5 78.0,378.3 79.1,377.7 80.2,376.8 81.3,376.8 82.4,377.1 83.5,377.0 84.6,380.8 85.7,380.1 86.8,379.9 87.9,379.9 89.0,380.4 90.1,380.4 91.2,380.8 92.3,377.8 93.4,378.0 94.5,378.0 95.6,378.0 96.7,378.0 97.8,381.4 98.9,378.6 100.0,380.0 101.1,380.0 102.2,378.9 103.3,376.8 104.4,376.8 105.5,376.8 106.6,377.7 107.7,377.5 108.8,377.5 109.9,377.5 111.0,377.8 112.3,377.8 113.6,377.5 114.9,378.1 116.2,378.1 117.5,378.1 118.8,377.9 120.1,377.9 121.4,377.9 122.7,377.9 124.0,376.2 125.3,376.2 126.6,377.5 127.9,377.5 129.2,375.9 130.5,375.9 131.8,375.9 133.1,375.9 134.4,375.9 135.7,375.9 137.0,375.9 138.3,377.8 139.6,376.7 140.9,376.7 142.2,376.8 143.5,375.6 144.8,375.6 146.1,377.3 147.4,376.8 148.7,376.8 150.0,377.4 151.3,377.4 152.6,376.1 153.9,375.4 155.2,377.5 156.5,377.5 157.8,376.8 159.1,376.6 160.4,376.6 161.7,376.6 163.0,377.3 164.3,377.3 165.6,377.3 166.9,377.3 168.2,377.3 169.5,377.3 171.0,376.4 186.0,376.4 188.0,378.0 190.0,376.0 191.4,376.3 192.8,376.3 194.2,375.5 195.6,375.5 197.0,375.5 198.4,375.5 199.8,375.5 201.2,375.5 202.6,375.9 204.0,375.9 205.4,376.6 206.8,376.4 208.2,376.4 209.6,376.4 211.0,376.4 212.4,374.9 213.8,375.1 215.2,375.2 216.6,375.2 218.0,375.2 219.4,375.2 220.8,375.0 222.2,375.6 223.6,374.6 225.0,375.4 226.4,376.4 227.8,376.4 229.2,375.4 230.6,374.4 232.0,376.4 233.4,376.4 234.8,376.4 236.2,374.4 237.6,374.4 239.0,374.4 240.4,375.8 241.8,375.8 243.2,374.1 244.6,375.1 246.0,375.0 247.4,375.0 248.8,375.0 250.2,375.0 251.6,375.0 253.0,375.0 254.4,375.9 255.8,375.1 257.2,375.1 258.6,375.1 260.0,375.1 261.4,376.2 262.8,376.2 264.2,376.2 265.6,376.2 267.0,376.1 268.4,375.5 269.8,375.6 271.2,375.6 272.6,374.6 274.0,374.9 275.4,375.9 276.8,376.3 278.2,376.3 279.6,376.3 281.0,376.3 282.4,376.3 283.8,376.3 285.2,374.3 286.6,374.3 288.0,375.7 289.4,375.7 290.8,375.7 292.2,375.6 293.6,375.6 295.0,375.6 296.4,375.6 297.8,375.6 299.2,374.8 300.6,374.8 302.0,373.9 303.4,373.7 304.8,373.5 306.2,373.5 307.6,373.2 309.0,373.2 310.4,372.1 311.8,372.1 313.2,372.1 314.6,372.1 316.0,372.1 317.4,370.8 318.8,372.8 320.2,370.7 321.6,370.8 323.0,372.2 324.4,372.2 325.8,372.2 327.2,370.9 328.6,370.9 330.0,370.9 331.4,371.5 332.8,371.5 334.2,372.5 335.6,370.8 337.0,370.8 338.4,370.8 339.8,371.2 341.2,372.6 342.6,372.6 344.0,372.6 346.0,371.5 346.8,378.4 349.0,377.3 351.0,376.0 352.7,376.1 354.4,374.2 356.1,374.2 357.8,375.7 359.5,375.2 361.2,374.7 362.9,374.7 364.6,374.7 366.3,374.7 368.0,376.6 369.7,376.6 371.4,376.6 373.1,376.6 374.8,374.2 376.5,374.2 378.2,374.2 379.9,374.2 381.6,374.2 383.3,375.8 385.0,375.8 386.7,375.8 388.4,375.4 390.1,375.4 391.8,376.1 393.5,376.1 395.2,376.1 396.9,374.3 398.6,374.3 400.3,374.3 402.0,374.3 403.7,374.2 405.4,375.3 407.1,375.3 408.8,376.3 410.5,375.9 412.2,375.9 413.9,376.7 415.6,376.7 417.3,376.9 419.0,376.9 420.7,376.8 422.4,373.6 424.1,373.6 425.8,375.7 427.5,375.8 429.2,375.8 430.9,374.2 432.6,373.1 434.3,374.3 436.0,374.9 437.7,373.6 439.4,373.6 441.1,373.6 442.8,373.6 444.5,373.6 446.2,373.6 447.9,373.6 449.6,373.6 451.3,373.6 453.0,372.5 454.7,373.1 456.4,373.1 458.1,374.2 459.8,374.1 461.5,374.1 463.2,374.1 464.9,374.1 466.6,375.0 468.3,374.6 470.0,374.6 471.7,374.6 473.4,374.6 475.1,374.6 476.8,374.6 478.5,374.6 480.2,374.6 481.9,374.6 483.6,374.4 485.3,374.9 487.0,375.8 488.7,375.8 490.4,375.8 492.1,375.8 493.8,374.4 495.5,375.8 497.2,375.8 498.9,375.8 500.6,375.2 502.3,375.2 504.0,375.2 505.7,375.2 507.4,374.1 509.1,374.1 510.8,374.1 512.5,374.4 514.2,375.3 515.9,373.7 517.6,373.7 519.3,375.1 521.0,373.1 522.7,375.4 524.4,375.4 526.1,375.4 527.8,372.9 529.5,373.3 531.2,373.4 532.9,373.4 534.6,373.4 536.3,373.4 538.0,373.1 539.7,373.5 541.4,373.7 543.1,373.7 544.8,373.7 546.5,373.7 548.2,373.8 549.9,373.8 551.6,374.6 553.3,374.6 555.0,374.4 556.7,374.4 558.4,374.4 560.1,373.7 561.8,374.6 563.5,374.6 565.2,374.6 566.9,374.6 568.6,374.6 570.3,374.6 572.0,374.6 573.7,372.5 575.4,373.9 577.1,373.9 578.8,374.4 580.5,374.4 582.2,374.4 583.9,374.4 585.6,373.5 587.3,373.5 589.0,373.5 590.7,373.5 592.4,373.5 594.1,373.5 595.8,375.3 597.5,375.3 599.2,375.3 600.9,375.3 602.6,375.3 604.3,375.3 606.0,373.1 607.7,374.2 609.4,374.2 611.1,374.2 612.8,372.7 614.5,372.7 616.2,375.2 617.9,375.2 619.6,372.4 621.3,372.4 623.0,372.4 624.7,373.6 626.4,372.5 628.1,372.5 629.8,375.0 631.5,373.0 633.2,372.7 634.9,375.0 636.6,374.2 638.3,374.2 640.0,374.2 641.7,374.6 643.4,374.6 645.1,372.6 646.8,372.6 648.5,372.6 650.2,372.6 651.9,375.0 653.6,375.0 655.3,375.0 657.0,375.0 658.7,373.9 660.4,373.9 662.1,373.9 663.8,373.8 665.5,374.5 667.2,374.5 668.9,373.6 670.6,373.6 672.3,373.6 674.0,373.6 675.7,373.6 677.4,373.6 679.1,373.8 680.8,373.8 682.5,373.8 684.2,373.8 685.9,373.5 687.6,373.2 689.3,373.9 691.0,374.2 692.7,374.2 694.4,374.2 696.1,375.2 697.8,374.0 700.0,374.1 702.0,372.5 704.6,374.1 708.2,372.5 713.4,372.5 715.5,377.2 717.5,376.6 722.2,373.6 725.3,376.6 728.9,373.0 730.4,376.6 734.0,376.1 736.1,374.1 738.2,371.5 738.7,380.0 739.2,372.0 739.7,380.8 740.2,371.0 740.7,379.5 741.2,370.0 741.8,380.3 742.3,368.0 742.8,365.8 743.3,377.0 743.8,371.5 744.3,365.8 744.8,377.0 745.4,375.6 746.4,371.5 747.4,378.7 749.0,378.2 750.5,373.6 752.0,366.3 753.1,370.5 754.1,373.0 755.2,379.2 756.2,372.5 756.7,378.0 757.2,378.7 757.7,373.0 758.2,372.0 758.8,377.5 759.3,377.2 759.8,371.5 760.1,371.5 760.2,397.3"/>
<line x1="172.1" y1="58.5" x2="172.1" y2="76" stroke="#6b5a2a" stroke-width="1" stroke-dasharray="1.5 1.6"/>
<line x1="172.2" y1="86.4" x2="172.2" y2="436.0" stroke="#a87a2c" stroke-width="1.1" stroke-dasharray="1.5 1.95"/>
<path d="M168.4 79.5H176.8L172.5 84.9Z" fill="#f2a93c"/>
<path d="M168.6 458.6H176.4L172.5 453.8Z" fill="#f2a93c"/>
</svg>
<div id="ystrip"></div><div id="xstrip"></div><div id="axisline"></div>
<div class="ydiv" style="top:202.2px"></div>
<div class="ydiv" style="top:318.8px"></div>
<svg style="left:0;top:0" width="800" height="485" viewBox="0 0 800 485">
<rect x="761.4" y="85.50" width="5.2" height="1" fill="#dde4ee"/>
<rect x="761.4" y="95.22" width="4.4" height="1" fill="#dde4ee"/>
<rect x="761.4" y="104.94" width="4.4" height="1" fill="#dde4ee"/>
<rect x="761.4" y="114.67" width="4.4" height="1" fill="#dde4ee"/>
<rect x="761.4" y="124.39" width="4.4" height="1" fill="#dde4ee"/>
<rect x="761.4" y="134.11" width="4.4" height="1" fill="#dde4ee"/>
<rect x="761.4" y="143.83" width="4.4" height="1" fill="#dde4ee"/>
<rect x="761.4" y="153.56" width="4.4" height="1" fill="#dde4ee"/>
<rect x="761.4" y="163.28" width="4.4" height="1" fill="#dde4ee"/>
<rect x="761.4" y="173.00" width="4.4" height="1" fill="#dde4ee"/>
<rect x="761.4" y="182.72" width="4.4" height="1" fill="#dde4ee"/>
<rect x="761.4" y="192.44" width="4.4" height="1" fill="#dde4ee"/>
<rect x="761.4" y="202.17" width="5.2" height="1" fill="#dde4ee"/>
<rect x="761.4" y="211.89" width="4.4" height="1" fill="#dde4ee"/>
<rect x="761.4" y="221.61" width="4.4" height="1" fill="#dde4ee"/>
<rect x="761.4" y="231.33" width="4.4" height="1" fill="#dde4ee"/>
<rect x="761.4" y="241.06" width="4.4" height="1" fill="#dde4ee"/>
<rect x="761.4" y="250.78" width="4.4" height="1" fill="#dde4ee"/>
<rect x="761.4" y="260.50" width="4.4" height="1" fill="#dde4ee"/>
<rect x="761.4" y="270.22" width="4.4" height="1" fill="#dde4ee"/>
<rect x="761.4" y="279.94" width="4.4" height="1" fill="#dde4ee"/>
<rect x="761.4" y="289.67" width="4.4" height="1" fill="#dde4ee"/>
<rect x="761.4" y="299.39" width="4.4" height="1" fill="#dde4ee"/>
<rect x="761.4" y="309.11" width="4.4" height="1" fill="#dde4ee"/>
<rect x="761.4" y="318.83" width="5.2" height="1" fill="#dde4ee"/>
<rect x="761.4" y="328.56" width="4.4" height="1" fill="#dde4ee"/>
<rect x="761.4" y="338.28" width="4.4" height="1" fill="#dde4ee"/>
<rect x="761.4" y="348.00" width="4.4" height="1" fill="#dde4ee"/>
<rect x="761.4" y="357.72" width="4.4" height="1" fill="#dde4ee"/>
<rect x="761.4" y="367.44" width="4.4" height="1" fill="#dde4ee"/>
<rect x="761.4" y="377.17" width="4.4" height="1" fill="#dde4ee"/>
<rect x="761.4" y="386.89" width="4.4" height="1" fill="#dde4ee"/>
<rect x="761.4" y="396.61" width="4.4" height="1" fill="#dde4ee"/>
<rect x="761.4" y="406.33" width="4.4" height="1" fill="#dde4ee"/>
<rect x="761.4" y="416.06" width="4.4" height="1" fill="#dde4ee"/>
<rect x="761.4" y="425.78" width="4.4" height="1" fill="#dde4ee"/>
<rect x="761.4" y="435.50" width="5.2" height="1" fill="#dde4ee"/>
<rect x="9.45" y="436.8" width="1.1" height="4.8" fill="#e4eaf2"/>
<rect x="37.64" y="436.2" width="1.2" height="1.3" fill="#c9d3e2"/>
<rect x="65.88" y="436.2" width="1.2" height="1.3" fill="#c9d3e2"/>
<rect x="94.12" y="436.2" width="1.2" height="1.3" fill="#c9d3e2"/>
<rect x="122.37" y="436.2" width="1.2" height="1.3" fill="#c9d3e2"/>
<rect x="150.61" y="436.2" width="1.2" height="1.3" fill="#c9d3e2"/>
<rect x="178.90" y="436.8" width="1.1" height="4.8" fill="#e4eaf2"/>
<rect x="207.09" y="436.2" width="1.2" height="1.3" fill="#c9d3e2"/>
<rect x="235.33" y="436.2" width="1.2" height="1.3" fill="#c9d3e2"/>
<rect x="263.57" y="436.2" width="1.2" height="1.3" fill="#c9d3e2"/>
<rect x="291.82" y="436.2" width="1.2" height="1.3" fill="#c9d3e2"/>
<rect x="320.06" y="436.2" width="1.2" height="1.3" fill="#c9d3e2"/>
<rect x="348.35" y="436.8" width="1.1" height="4.8" fill="#e4eaf2"/>
<rect x="376.54" y="436.2" width="1.2" height="1.3" fill="#c9d3e2"/>
<rect x="404.78" y="436.2" width="1.2" height="1.3" fill="#c9d3e2"/>
<rect x="433.02" y="436.2" width="1.2" height="1.3" fill="#c9d3e2"/>
<rect x="461.27" y="436.2" width="1.2" height="1.3" fill="#c9d3e2"/>
<rect x="489.51" y="436.2" width="1.2" height="1.3" fill="#c9d3e2"/>
<rect x="517.80" y="436.8" width="1.1" height="4.8" fill="#e4eaf2"/>
<rect x="545.99" y="436.2" width="1.2" height="1.3" fill="#c9d3e2"/>
<rect x="574.23" y="436.2" width="1.2" height="1.3" fill="#c9d3e2"/>
<rect x="602.47" y="436.2" width="1.2" height="1.3" fill="#c9d3e2"/>
<rect x="630.72" y="436.2" width="1.2" height="1.3" fill="#c9d3e2"/>
<rect x="658.96" y="436.2" width="1.2" height="1.3" fill="#c9d3e2"/>
<rect x="687.25" y="436.8" width="1.1" height="4.8" fill="#e4eaf2"/>
<rect x="715.44" y="436.2" width="1.2" height="1.3" fill="#c9d3e2"/>
<rect x="743.68" y="436.2" width="1.2" height="1.3" fill="#c9d3e2"/>
<rect x="759.6" y="454.5" width="1.6" height="3.5" fill="#1c2430"/>
<rect x="760.5" y="80.4" width="1.2" height="5.6" fill="#1b2230"/>
<rect x="10" y="85" width="750.4" height="1.1" fill="#161b26"/>
</svg>
<span class="xl t" style="left:10.6px">0</span>
<span class="xl t" style="left:180.0px">22118400</span>
<span class="xl t" style="left:349.5px">44236800</span>
<span class="xl t" style="left:518.9px">66355200</span>
<span class="xl t" style="left:688.4px">88473600</span>
<span class="xl t" style="left:762.4px;top:437.2px;width:33.7px;overflow:hidden;transform:scaleX(0.85)">1:9798(</span>
<span class="yl t" style="top:92.2px">25</span>
<span class="yl t" style="top:111.7px">15</span>
<span class="yl t" style="top:131.1px">5</span>
<span class="yl t" style="top:150.6px">-5</span>
<span class="yl t" style="top:170.0px">-15</span>
<span class="yl t" style="top:189.4px">-25</span>
<span class="yl t yb" style="top:87.0px">30</span>
<span class="yl t yb" style="top:194.3px;left:766.4px">-30</span>
<span class="yl t" style="top:208.9px">25</span>
<span class="yl t" style="top:228.3px">15</span>
<span class="yl t" style="top:247.8px">5</span>
<span class="yl t" style="top:267.2px">-5</span>
<span class="yl t" style="top:286.7px">-15</span>
<span class="yl t" style="top:306.1px">-25</span>
<span class="yl t yb" style="top:203.7px">30</span>
<span class="yl t yb" style="top:310.9px;left:766.4px">-30</span>
<span class="yl t" style="top:325.6px">25</span>
<span class="yl t" style="top:345.0px">15</span>
<span class="yl t" style="top:364.4px">5</span>
<span class="yl t" style="top:383.9px">-5</span>
<span class="yl t" style="top:403.3px">-15</span>
<span class="yl t" style="top:422.8px">-25</span>
<span class="yl t yb" style="top:320.3px">30</span>
<span class="yl t yb" style="top:427.6px;left:766.4px">-30</span>
<span class="lbl t l0" style="top:88.75px">DltF:<svg class="cj" role="img" aria-label="副翼偏角" width="33.40" height="10.44" viewBox="0 -7.66 33.40 10.44" style="position:static;display:inline-block;vertical-align:-2.9px"><text x="0" y="0" font-size="8.35" fill="#ecebe6" stroke="#ecebe6" stroke-width="0.2">副翼偏角</text></svg></span>
<span class="lbl t l1" style="top:102.85px">(-6.60 ~ 3.22)°</span>
<span class="lbl t l2" style="top:116.50px"><svg class="cj" role="img" aria-label="均值" width="16.70" height="10.44" viewBox="0 -7.66 16.70 10.44" style="position:static;display:inline-block;vertical-align:-2.9px"><text x="0" y="0" font-size="8.35" fill="#ecebe6" stroke="#ecebe6" stroke-width="0.2">均值</text></svg>(-2.50) <svg class="cj" role="img" aria-label="范围" width="16.70" height="10.44" viewBox="0 -7.66 16.70 10.44" style="position:static;display:inline-block;vertical-align:-2.9px"><text x="0" y="0" font-size="8.35" fill="#ecebe6" stroke="#ecebe6" stroke-width="0.2">范围</text></svg>(9.82)</span>
<span class="lbl t" style="top:102.85px;left:71.8px">-3.10</span>
<span class="lbl t l0" style="top:205.42px">DltS:<svg class="cj" role="img" aria-label="升降舵偏角" width="41.75" height="10.44" viewBox="0 -7.66 41.75 10.44" style="position:static;display:inline-block;vertical-align:-2.9px"><text x="0" y="0" font-size="8.35" fill="#ecebe6" stroke="#ecebe6" stroke-width="0.2">升降舵偏角</text></svg></span>
<span class="lbl t l1" style="top:219.52px">(-13.31 ~ -0.47)°</span>
<span class="lbl t l2" style="top:233.17px"><svg class="cj" role="img" aria-label="均值" width="16.70" height="10.44" viewBox="0 -7.66 16.70 10.44" style="position:static;display:inline-block;vertical-align:-2.9px"><text x="0" y="0" font-size="8.35" fill="#ecebe6" stroke="#ecebe6" stroke-width="0.2">均值</text></svg>(-3.10) <svg class="cj" role="img" aria-label="范围" width="16.70" height="10.44" viewBox="0 -7.66 16.70 10.44" style="position:static;display:inline-block;vertical-align:-2.9px"><text x="0" y="0" font-size="8.35" fill="#ecebe6" stroke="#ecebe6" stroke-width="0.2">范围</text></svg>(12.84)</span>
<span class="lbl t" style="top:219.52px;left:81.2px">-1.78</span>
<span class="lbl t l0" style="top:322.08px">DltFx:DltFx</span>
<span class="lbl t l1" style="top:336.18px">(-30.49 ~ 10.20)°</span>
<span class="lbl t l2" style="top:349.83px"><svg class="cj" role="img" aria-label="均值" width="16.70" height="10.44" viewBox="0 -7.66 16.70 10.44" style="position:static;display:inline-block;vertical-align:-2.9px"><text x="0" y="0" font-size="8.35" fill="#ecebe6" stroke="#ecebe6" stroke-width="0.2">均值</text></svg>(0.65) <svg class="cj" role="img" aria-label="范围" width="16.70" height="10.44" viewBox="0 -7.66 16.70 10.44" style="position:static;display:inline-block;vertical-align:-2.9px"><text x="0" y="0" font-size="8.35" fill="#ecebe6" stroke="#ecebe6" stroke-width="0.2">范围</text></svg>(40.69)</span>
<span class="lbl t" style="top:336.18px;left:81.8px">-0.42</span>
<div id="status">
<div class="st" style="left:5px"><svg class="cj" role="img" aria-label="就绪" width="20.60" height="13.08" viewBox="0 -9.59 20.60 13.08" style="left:-0.30px;top:-0.6px"><text x="0" y="0" font-size="10.3" fill="#101216" stroke="#101216" stroke-width="0.25">就绪</text></svg></div>
<div class="st" style="left:305.5px"><svg class="cj" role="img" aria-label="时间" width="20.60" height="13.08" viewBox="0 -9.59 20.60 13.08" style="left:-0.30px;top:-0.6px"><text x="0" y="0" font-size="10.3" fill="#101216" stroke="#101216" stroke-width="0.25">时间</text></svg><span class="m" style="left:20.60px">:03:51:30.925</span></div>
<div class="st" style="left:448.8px"><svg class="cj" role="img" aria-label="参数" width="20.60" height="13.08" viewBox="0 -9.59 20.60 13.08" style="left:-0.30px;top:-0.6px"><text x="0" y="0" font-size="10.3" fill="#101216" stroke="#101216" stroke-width="0.25">参数</text></svg><span class="m" style="left:20.60px">:DltF</span></div>
<div class="st" style="left:520.5px"><span class="m" style="left:0.00px">85345848:</span></div>
<div class="st" style="left:583.5px"><span class="m" style="left:0.00px">-1.58</span></div>
<div class="st" style="left:661.3px"><svg class="cj" role="img" aria-label="段" width="10.30" height="13.08" viewBox="0 -9.59 10.30 13.08" style="left:-0.30px;top:-0.6px"><text x="0" y="0" font-size="10.3" fill="#101216" stroke="#101216" stroke-width="0.25">段</text></svg><span class="m" style="left:10.30px">:0 </span><svg class="cj" role="img" aria-label="未定义" width="30.90" height="13.08" viewBox="0 -9.59 30.90 13.08" style="left:25.45px;top:-0.6px"><text x="0" y="0" font-size="10.3" fill="#101216" stroke="#101216" stroke-width="0.25">未定义</text></svg></div>
<div class="ssep" style="left:299px"></div>
<div class="ssep" style="left:445px"></div>
<div class="ssep" style="left:657px"></div>
<div class="ssep" style="left:785px"></div>
<svg style="left:789px;top:6px" width="10" height="10" viewBox="0 0 10 10"><g fill="#b4bccb"><rect x="7" y="1" width="1.6" height="1.6"/><rect x="4" y="4" width="1.6" height="1.6"/><rect x="7" y="4" width="1.6" height="1.6"/><rect x="1" y="7" width="1.6" height="1.6"/><rect x="4" y="7" width="1.6" height="1.6"/><rect x="7" y="7" width="1.6" height="1.6"/></g></svg>
</div><div id="botband"></div>
</div>
</body></html>
